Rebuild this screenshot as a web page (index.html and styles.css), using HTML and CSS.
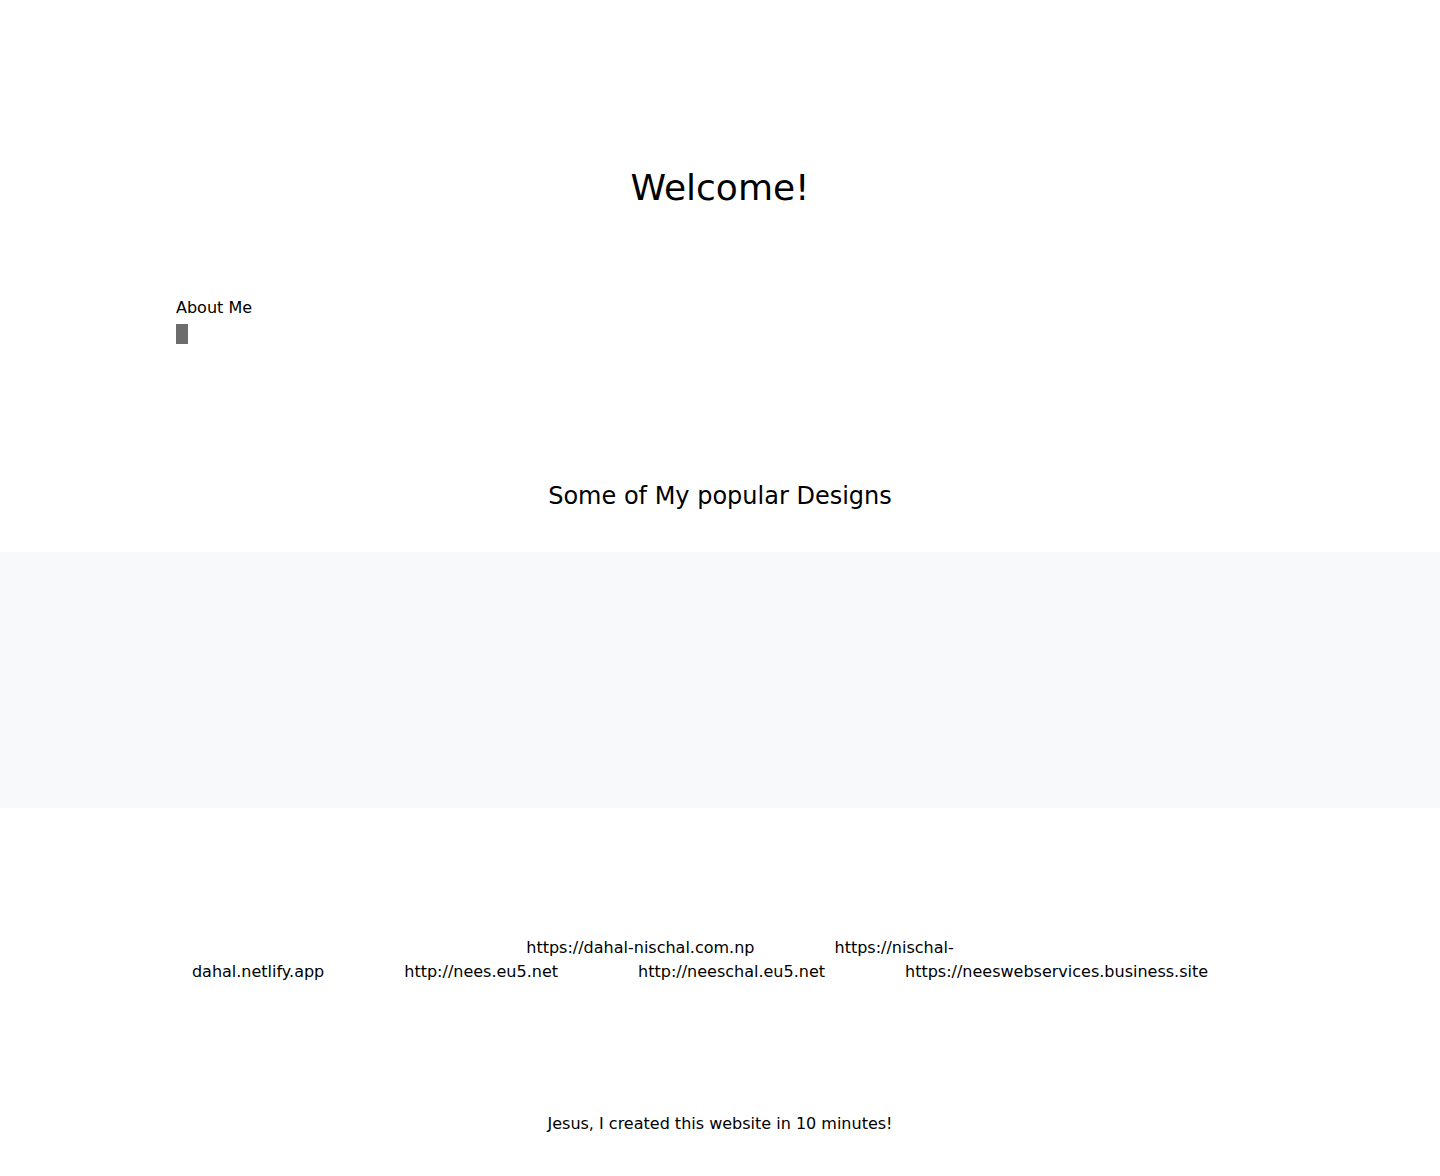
FILE: index.html
```html
<!DOCTYPE html>
<html lang="en">
<head>
<meta charset="utf-8">
<title>Welcome!</title>
<link rel="stylesheet" href="styles.css">
</head>
<body>
<header class="hero">
  <h1 class="hero-title">Welcome!</h1>
</header>
<section class="about">
  <h2 class="about-title">About Me</h2>
  <div class="about-box"></div>
</section>
<section class="designs">
  <h2 class="designs-title">Some of My popular Designs</h2>
</section>
<section class="band"></section>
<section class="links"><a class="link" href="#">https://dahal-nischal.com.np</a><a class="link" href="#">https://nischal-dahal.netlify.app</a><a class="link" href="#">http://nees.eu5.net</a><a class="link" href="#">http://neeschal.eu5.net</a><a class="link" href="#">https://neeswebservices.business.site</a></section>
<footer class="footer">Jesus, I created this website in 10 minutes!</footer>
</body>
</html>
```
FILE: styles.css
```css
* { box-sizing: border-box; }
html, body { margin: 0; padding: 0; }
body {
  font-family: "DejaVu Sans", sans-serif;
  color: #000;
  background: #fff;
  font-size: 16px;
}
.hero { padding-top: 167px; }
.hero-title {
  margin: 0;
  text-align: center;
  font-weight: normal;
  font-size: 36px;
  line-height: 42px;
}
.about { padding: 87px 176px 0; }
.about-title {
  margin: 0;
  font-weight: normal;
  font-size: 16px;
  line-height: 24px;
}
.about-box {
  width: 12px;
  height: 20px;
  margin-top: 4px;
  background: #6c6c6c;
}
.designs { padding-top: 137px; }
.designs-title {
  margin: 0;
  text-align: center;
  font-weight: normal;
  font-size: 24px;
  line-height: 30px;
}
.band {
  margin-top: 41px;
  height: 256px;
  background: #f8f9fa;
}
.links {
  margin-top: 128px;
  text-align: center;
  line-height: 24px;
}
.link {
  color: #000;
  text-decoration: none;
  margin: 0 40px;
}
.footer {
  margin-top: 128px;
  text-align: center;
  line-height: 24px;
}
```
